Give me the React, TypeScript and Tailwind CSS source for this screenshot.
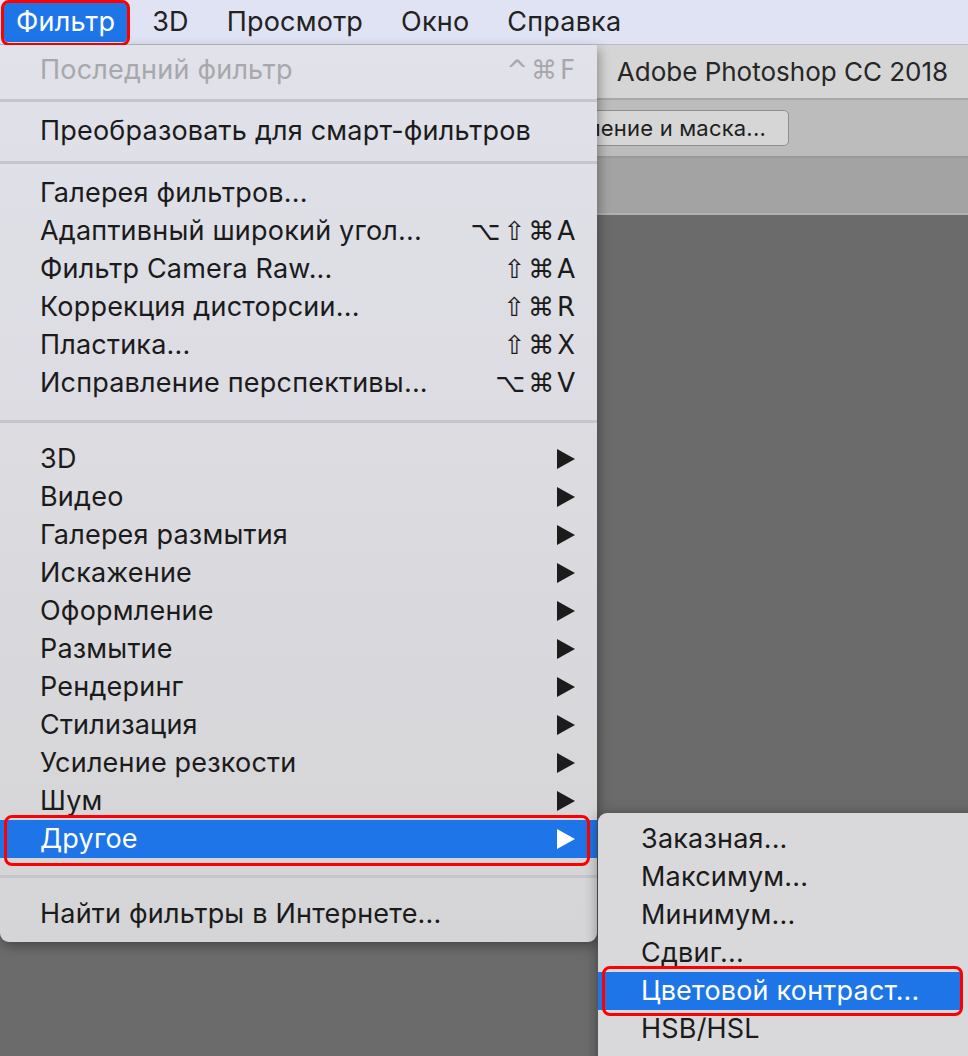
import React from 'react';

type Row =
  | { kind: 'item'; label: string; shortcut?: string; disabled?: boolean; sub?: boolean; active?: boolean }
  | { kind: 'sep'; h: string };

const menuRows: Row[] = [
  { kind: 'item', label: 'Последний фильтр', shortcut: '^⌘F', disabled: true },
  { kind: 'sep', h: 'h-[23px]' },
  { kind: 'item', label: 'Преобразовать для смарт-фильтров' },
  { kind: 'sep', h: 'h-[24px]' },
  { kind: 'item', label: 'Галерея фильтров...' },
  { kind: 'item', label: 'Адаптивный широкий угол...', shortcut: '⌥⇧⌘A' },
  { kind: 'item', label: 'Фильтр Camera Raw...', shortcut: '⇧⌘A' },
  { kind: 'item', label: 'Коррекция дисторсии...', shortcut: '⇧⌘R' },
  { kind: 'item', label: 'Пластика...', shortcut: '⇧⌘X' },
  { kind: 'item', label: 'Исправление перспективы...', shortcut: '⌥⌘V' },
  { kind: 'sep', h: 'h-[38px]' },
  { kind: 'item', label: '3D', sub: true },
  { kind: 'item', label: 'Видео', sub: true },
  { kind: 'item', label: 'Галерея размытия', sub: true },
  { kind: 'item', label: 'Искажение', sub: true },
  { kind: 'item', label: 'Оформление', sub: true },
  { kind: 'item', label: 'Размытие', sub: true },
  { kind: 'item', label: 'Рендеринг', sub: true },
  { kind: 'item', label: 'Стилизация', sub: true },
  { kind: 'item', label: 'Усиление резкости', sub: true },
  { kind: 'item', label: 'Шум', sub: true },
  { kind: 'item', label: 'Другое', sub: true, active: true },
  { kind: 'sep', h: 'h-[37px]' },
  { kind: 'item', label: 'Найти фильтры в Интернете...' },
];

const subItems = ['Заказная...', 'Максимум...', 'Минимум...', 'Сдвиг...', 'Цветовой контраст...', 'HSB/HSL'];

function Arrow({ white }: { white?: boolean }) {
  return (
    <svg width="18" height="20" viewBox="0 0 18 20" className="shrink-0">
      <path d="M0 0 L18 10 L0 20 Z" fill={white ? '#ffffff' : '#1c1c1c'} />
    </svg>
  );
}

function MenuRow({ row }: { row: Extract<Row, { kind: 'item' }> }) {
  return (
    <div
      className={`relative flex h-[38px] items-center justify-between pl-[40px] pr-[22px] ${
        row.active ? 'bg-[#1d75e8] text-white' : row.disabled ? 'text-[#a8a8aa]' : 'text-[#1b1b1b]'
      }`}
    >
      <span>{row.label}</span>
      {row.shortcut && (
        <span className="-mr-[3px] font-['DejaVu_Sans',sans-serif] text-[26px] tracking-[3px]">{row.shortcut}</span>
      )}
      {row.sub && <Arrow white={row.active} />}
      {row.active && (
        <span className="pointer-events-none absolute left-[4px] right-[7px] top-[-5px] bottom-[-8px] rounded-[8px] border-[3px] border-[#ff0000]" />
      )}
    </div>
  );
}

export default function App() {
  return (
    <div className="relative h-[1056px] w-[968px] overflow-hidden bg-[#6b6b6b] font-['Inter','Liberation_Sans',sans-serif] text-[27px] tracking-[0.2px]">
      {/* Menu bar */}
      <div className="flex h-[45px] items-center border-b border-[#b9bccb] bg-[#e0e3f3] pl-[4px] text-[#222222]">
        <div className="relative flex h-[39px] items-center rounded-[4px] bg-[#1d75e8] px-[12px] text-white">
          Фильтр
          <span className="pointer-events-none absolute -left-[3px] -right-[3px] -top-[3px] -bottom-[4px] rounded-[8px] border-[3px] border-[#ff0000]" />
        </div>
        <span className="ml-[25px]">3D</span>
        <span className="ml-[38px]">Просмотр</span>
        <span className="ml-[38px]">Окно</span>
        <span className="ml-[38px]">Справка</span>
      </div>

      {/* Photoshop window behind the menu */}
      <div className="grid grid-cols-[597px_1fr]">
        <div />
        <div className="flex flex-col shadow-[inset_12px_0_10px_-8px_rgba(0,0,0,0.25)]">
          <div className="flex h-[55px] items-center justify-center border-b-2 border-[#a8a8a8] bg-[#d5d5d5] text-[26px] tracking-normal text-[#262626]">
            Adobe Photoshop CC 2018
          </div>
          <div className="flex h-[58px] items-center border-b-2 border-[#999999] bg-[#bcbcbc]">
            <div className="-ml-[90px] flex h-[36px] w-[282px] items-center justify-end rounded-[5px] border border-[#8e8e8e] bg-[#d6d6d6] pr-[22px] text-[22px] text-[#1e1e1e]">
              Выделение и маска...
            </div>
          </div>
          <div className="h-[57px] border-b-2 border-[#b1b1b1] bg-[#a3a3a3]" />
        </div>
      </div>

      {/* Filter dropdown */}
      <div className="absolute left-0 top-[45px] w-[597px] rounded-b-[9px] bg-gradient-to-b from-[#e1e2ea] to-[#d5d4d6] pb-[9px] pt-[6px] shadow-[2px_4px_12px_rgba(0,0,0,0.35)]">
        {menuRows.map((row, i) =>
          row.kind === 'sep' ? (
            <div key={i} className={`flex items-center ${row.h}`}>
              <div className="h-[3px] w-full bg-[#c6c6ca]" />
            </div>
          ) : (
            <MenuRow key={i} row={row} />
          )
        )}
      </div>

      {/* Submenu "Другое" */}
      <div className="absolute left-[598px] top-[813px] h-[260px] w-[380px] rounded-tl-[9px] bg-[#d9d8da] pt-[7px] shadow-[0_2px_14px_rgba(0,0,0,0.4)]">
        {subItems.map((label, i) => {
          const active = i === 4;
          return (
            <div
              key={label}
              className={`relative flex h-[38px] items-center pl-[43px] ${
                active ? 'mr-[16px] bg-[#1d75e8] text-white' : 'text-[#1b1b1b]'
              }`}
            >
              {label}
              {active && (
                <span className="pointer-events-none absolute left-[4px] right-[-1px] top-[-6px] bottom-[-6px] rounded-[8px] border-[3px] border-[#ff0000]" />
              )}
            </div>
          );
        })}
      </div>
    </div>
  );
}
